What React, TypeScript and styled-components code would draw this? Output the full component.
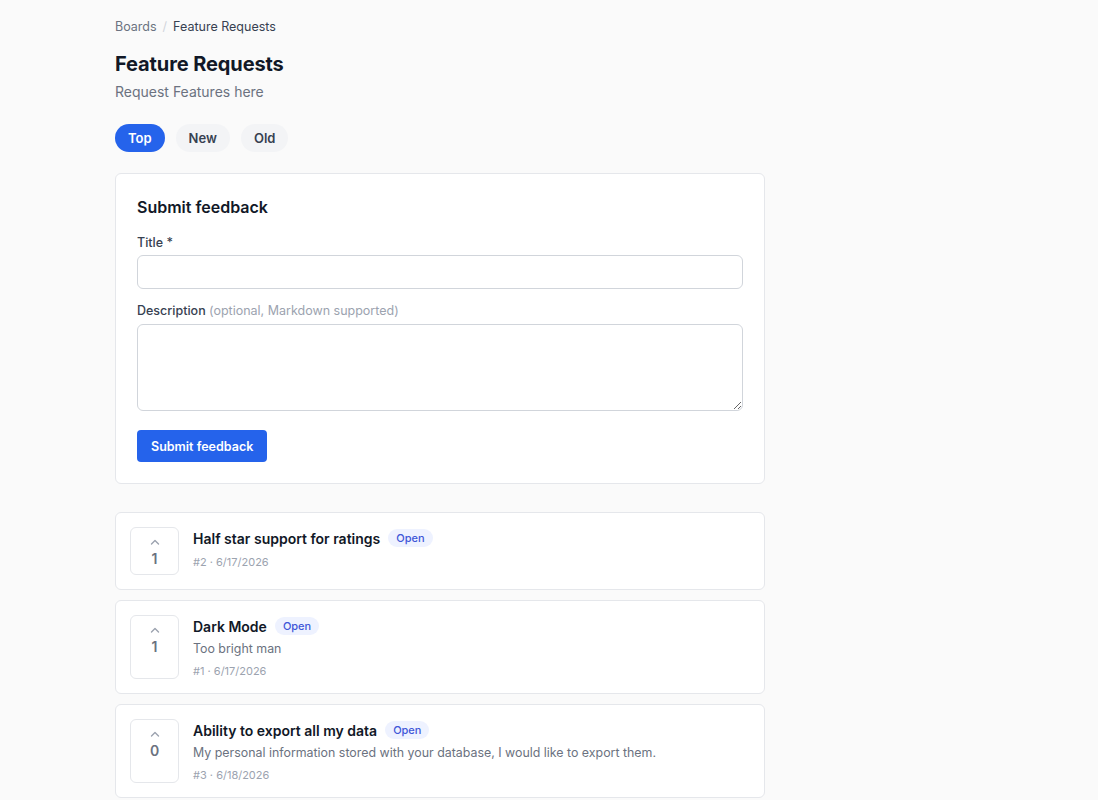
import styled, { createGlobalStyle } from "styled-components"

const GlobalStyle = createGlobalStyle`
  body {
    margin: 0;
    background: #fafafa;
    font-family: Inter, "Noto Sans", sans-serif;
    color: #111827;
  }
  * {
    box-sizing: border-box;
  }
`

const Page = styled.div`
  width: 650px;
  margin-left: 115px;
  padding-top: 18px;
  padding-bottom: 40px;
`

const Crumbs = styled.nav`
  display: flex;
  gap: 6px;
  font-size: 12.5px;
  line-height: 18px;
  color: #6b7280;
  .sep {
    color: #d1d5db;
  }
  .current {
    color: #374151;
  }
`

const Title = styled.h1`
  margin: 14px 0 0;
  font-size: 20px;
  line-height: 28px;
  font-weight: 700;
  letter-spacing: -0.1px;
`

const Subtitle = styled.p`
  margin: 4px 0 0;
  font-size: 14px;
  line-height: 20px;
  color: #6b7280;
`

const Tabs = styled.div`
  display: flex;
  gap: 11px;
  margin-top: 22px;
`

const Tab = styled.button<{ $active?: boolean }>`
  height: 28px;
  padding: 0 13px;
  border: none;
  border-radius: 999px;
  font-family: inherit;
  font-size: 13px;
  font-weight: 600;
  background: ${(p) => (p.$active ? "#2563eb" : "#f3f4f6")};
  color: ${(p) => (p.$active ? "#ffffff" : "#374151")};
`

const Card = styled.div`
  background: #ffffff;
  border: 1px solid #e5e7eb;
  border-radius: 6px;
`

const FormCard = styled(Card)`
  margin-top: 21px;
  padding: 22px 21px 21px;
  display: flex;
  flex-direction: column;
`

const FormHeading = styled.h2`
  margin: 0;
  font-size: 16px;
  line-height: 22px;
  font-weight: 600;
`

const Label = styled.label`
  display: block;
  font-size: 12.5px;
  line-height: 16px;
  font-weight: 500;
  color: #374151;
  span {
    font-weight: 400;
    color: #9ca3af;
  }
`

const Input = styled.input`
  display: block;
  width: 100%;
  height: 34px;
  margin-top: 4px;
  border: 1px solid #d1d5db;
  border-radius: 6px;
  background: #fff;
`

const TextArea = styled.textarea`
  display: block;
  width: 100%;
  height: 87px;
  margin-top: 5px;
  border: 1px solid #d1d5db;
  border-radius: 6px;
  background: #fff;
`

const FormField = styled.div`
  margin-top: 17px;
  & + & {
    margin-top: 14px;
  }
`

const SubmitButton = styled.button`
  align-self: flex-start;
  margin-top: 19px;
  height: 32px;
  padding: 0 14px;
  border: none;
  border-radius: 4px;
  background: #2563eb;
  color: #fff;
  font-family: inherit;
  font-size: 12.5px;
  font-weight: 600;
`

const List = styled.div`
  margin-top: 28px;
  display: flex;
  flex-direction: column;
  gap: 10px;
`

const PostCard = styled(Card)`
  display: flex;
  align-items: stretch;
  gap: 14px;
  padding: 14px;
`

const VoteBox = styled.div`
  width: 49px;
  min-height: 48px;
  flex-shrink: 0;
  border: 1px solid #e5e7eb;
  border-radius: 6px;
  display: flex;
  flex-direction: column;
  align-items: center;
  padding-top: 11px;
  color: #6b7280;
  svg {
    display: block;
  }
  .count {
    font-size: 14px;
    font-weight: 600;
    line-height: 18px;
    margin-top: 5px;
  }
`

const PostBody = styled.div`
  display: flex;
  flex-direction: column;
`

const PostTitleRow = styled.div`
  display: flex;
  align-items: center;
  gap: 8px;
  height: 22px;
`

const PostTitle = styled.span`
  font-size: 14px;
  font-weight: 600;
  color: #111827;
`

const Badge = styled.span`
  font-size: 11px;
  font-weight: 500;
  line-height: 18px;
  padding: 0 8px;
  border-radius: 999px;
  background: #eef2ff;
  color: #4057d8;
`

const PostDesc = styled.p`
  margin: 2px 0 -1px;
  font-size: 12.4px;
  line-height: 20px;
  color: #6b7280;
`

const Meta = styled.div`
  margin-top: 5px;
  font-size: 11px;
  line-height: 16px;
  color: #9ca3af;
`

type Post = {
  id: number
  title: string
  desc?: string
  votes: number
  date: string
}

const posts: Post[] = [
  { id: 2, title: "Half star support for ratings", votes: 1, date: "6/17/2026" },
  { id: 1, title: "Dark Mode", desc: "Too bright man", votes: 1, date: "6/17/2026" },
  {
    id: 3,
    title: "Ability to export all my data",
    desc: "My personal information stored with your database, I would like to export them.",
    votes: 0,
    date: "6/18/2026",
  },
]

const Chevron = () => (
  <svg width="10" height="6" viewBox="0 0 10 6" fill="none">
    <path d="M1.5 5L5 1.5L8.5 5" stroke="#9ca3af" strokeWidth="1.4" strokeLinecap="round" strokeLinejoin="round" />
  </svg>
)

const App = () => {
  return (
    <>
      <GlobalStyle />
      <Page>
        <Crumbs>
          <span>Boards</span>
          <span className="sep">/</span>
          <span className="current">Feature Requests</span>
        </Crumbs>
        <Title>Feature Requests</Title>
        <Subtitle>Request Features here</Subtitle>
        <Tabs>
          <Tab $active>Top</Tab>
          <Tab>New</Tab>
          <Tab>Old</Tab>
        </Tabs>

        <FormCard>
          <FormHeading>Submit feedback</FormHeading>
          <FormField>
            <Label>Title *</Label>
            <Input />
          </FormField>
          <FormField>
            <Label>
              Description <span>(optional, Markdown supported)</span>
            </Label>
            <TextArea />
          </FormField>
          <SubmitButton>Submit feedback</SubmitButton>
        </FormCard>

        <List>
          {posts.map((p) => (
            <PostCard key={p.id}>
              <VoteBox>
                <Chevron />
                <span className="count">{p.votes}</span>
              </VoteBox>
              <PostBody>
                <PostTitleRow>
                  <PostTitle>{p.title}</PostTitle>
                  <Badge>Open</Badge>
                </PostTitleRow>
                {p.desc && <PostDesc>{p.desc}</PostDesc>}
                <Meta>
                  #{p.id} · {p.date}
                </Meta>
              </PostBody>
            </PostCard>
          ))}
        </List>
      </Page>
    </>
  )
}

export default App
